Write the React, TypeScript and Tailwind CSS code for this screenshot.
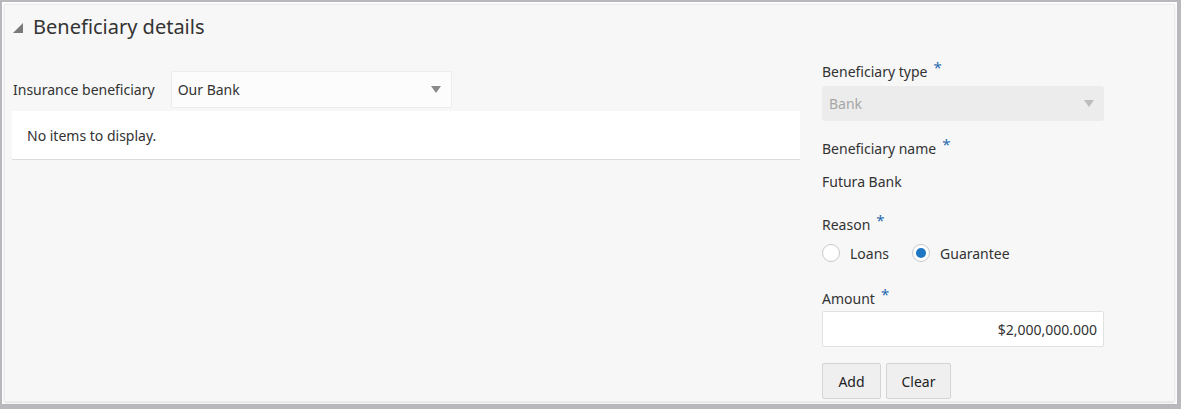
import React from 'react';

const font = { fontFamily: '"Noto Sans", "Liberation Sans", sans-serif' };

function Req() {
  return <span className="ml-[6px] text-[15px] leading-none text-[#2b6cb0] relative -top-[4px]">*</span>;
}

function Caret({ color = '#8a8a8a' }: { color?: string }) {
  return (
    <svg width="10" height="7" viewBox="0 0 10 7">
      <path d="M0 0 H10 L5 7 Z" fill={color} />
    </svg>
  );
}

function Radio({ checked, label }: { checked?: boolean; label: string }) {
  return (
    <label className="flex items-center gap-[10px]">
      <span className="w-[18px] h-[18px] rounded-full border border-[#c9c9c9] bg-white flex items-center justify-center">
        {checked && <span className="w-[10px] h-[10px] rounded-full bg-[#1f76c2]" />}
      </span>
      <span className="text-[14px] text-[#333]">{label}</span>
    </label>
  );
}

export default function App() {
  return (
    <div style={font} className="w-[1181px] h-[409px] bg-[#b9b9bd] pt-[2px] pl-[2px] pr-[4px] pb-[5px]">
      <div className="h-full bg-white p-[2px]">
        <div className="h-full bg-[#f7f7f7] border border-[#eaeaea] shadow-sm pl-[8px] pt-[8px]">
          {/* header */}
          <div className="flex items-center h-[28px]">
            <svg width="10" height="10" viewBox="0 0 10 10" className="mt-[2px]">
              <path d="M10 0 V10 H0 Z" fill="#7a7a7a" />
            </svg>
            <span className="ml-[10px] text-[20px] text-[#333] leading-none">Beneficiary details</span>
          </div>

          <div className="flex mt-[32px]">
            {/* left column */}
            <div className="w-[788px] -ml-[1px]">
              <div className="flex items-center h-[37px] -mt-[2px]">
                <span className="text-[14px] text-[#333] pl-[1px]">Insurance beneficiary</span>
                <div className="ml-[16px] w-[281px] h-[37px] bg-[#fcfcfc] border border-[#ececec] rounded-[2px] flex items-center justify-between pl-[6px] pr-[10px]">
                  <span className="text-[14px] text-[#333]">Our Bank</span>
                  <Caret />
                </div>
              </div>
              <div className="mt-[3px] h-[49px] bg-white border-b border-[#dcdcdc] flex items-center pl-[15px]">
                <span className="text-[14px] text-[#333]">No items to display.</span>
              </div>
            </div>

            {/* right column */}
            <div className="ml-[22px] w-[282px] -mt-[11px]">
              <div className="h-[18px] flex items-center text-[14px] text-[#333]">
                Beneficiary type<Req />
              </div>
              <div className="mt-[6px] h-[35px] bg-[#ececec] rounded-[3px] flex items-center justify-between pl-[7px] pr-[10px]">
                <span className="text-[14px] text-[#a6a6a6]">Bank</span>
                <Caret color="#bdbdbd" />
              </div>
              <div className="mt-[18px] h-[18px] flex items-center text-[14px] text-[#333]">
                Beneficiary name<Req />
              </div>
              <div className="mt-[15px] h-[18px] flex items-center text-[14px] text-[#333]">Futura Bank</div>
              <div className="mt-[25px] h-[18px] flex items-center text-[14px] text-[#333]">
                Reason<Req />
              </div>
              <div className="mt-[11px] h-[18px] flex items-center gap-[23px]">
                <Radio label="Loans" />
                <Radio checked label="Guarantee" />
              </div>
              <div className="mt-[27px] h-[18px] flex items-center text-[14px] text-[#333]">
                Amount<Req />
              </div>
              <div className="mt-[4px] h-[36px] bg-white border border-[#e2e2e2] rounded-[2px] flex items-center justify-end pr-[6px]">
                <span className="text-[14px] text-[#333]">$2,000,000.000</span>
              </div>
              <div className="mt-[16px] flex gap-[5px]">
                <button className="w-[59px] h-[36px] bg-[#efeff0] border border-[#d4d4d4] rounded-[2px] text-[14px] text-[#222]">Add</button>
                <button className="w-[65px] h-[36px] bg-[#efeff0] border border-[#d4d4d4] rounded-[2px] text-[14px] text-[#222]">Clear</button>
              </div>
            </div>
          </div>
        </div>
      </div>
    </div>
  );
}
